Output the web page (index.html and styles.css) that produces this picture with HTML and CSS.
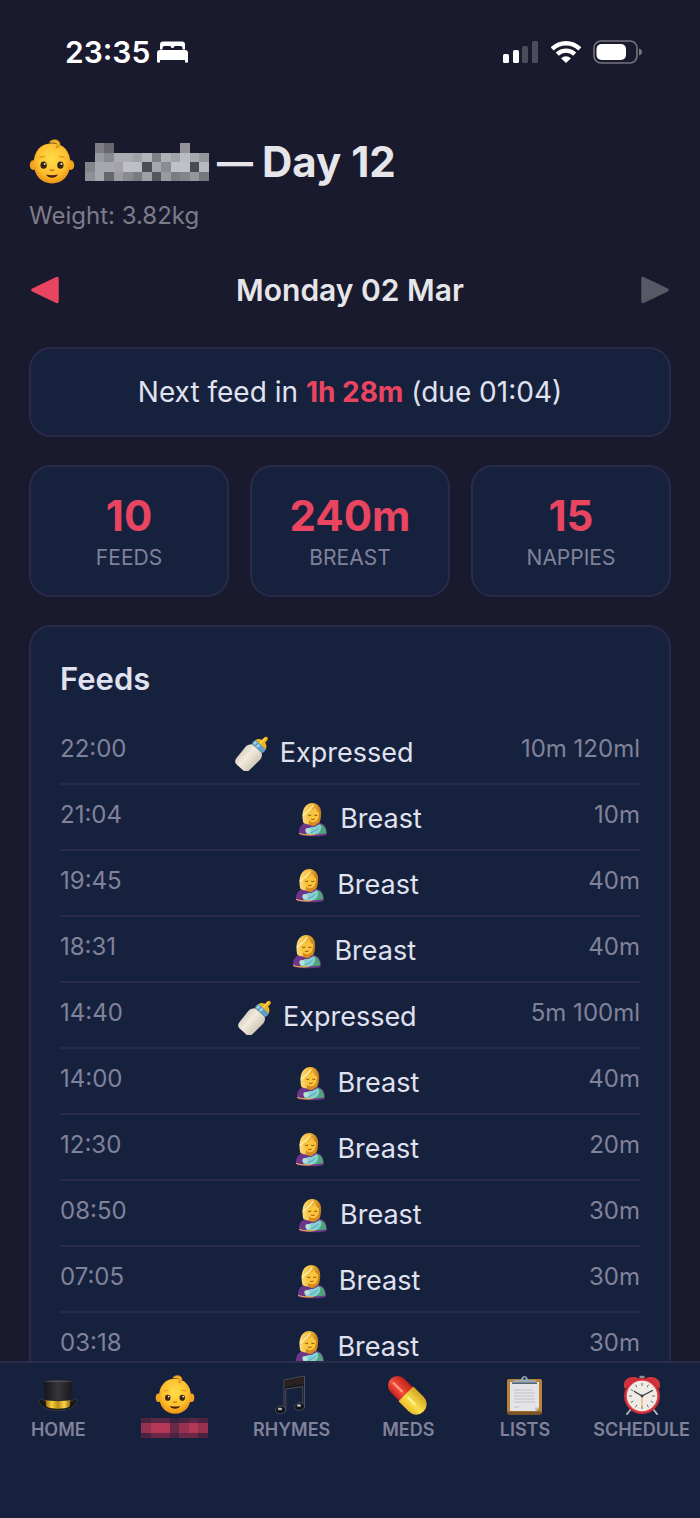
FILE: index.html
```
<!DOCTYPE html>
<html lang="en">
<head>
  <meta charset="UTF-8" />
  <meta name="viewport" content="width=device-width, initial-scale=1.0"/>
  <title>Day 12</title>
  <link rel="stylesheet" href="styles.css">
</head>
<body>
  <!-- shared icons -->
  <svg class="defs" aria-hidden="true">
    <defs>
      <radialGradient id="skin" cx=".5" cy=".4" r=".6">
        <stop offset="0" stop-color="#ffdc4a"/><stop offset=".65" stop-color="#fdc02e"/><stop offset="1" stop-color="#ee9416"/>
      </radialGradient>
      <linearGradient id="hair" x1="0" x2="1">
        <stop offset="0" stop-color="#fbdc78"/><stop offset=".5" stop-color="#f3b93c"/><stop offset="1" stop-color="#c07a1a"/>
      </linearGradient>
      <linearGradient id="milk" x1="0" x2="1">
        <stop offset="0" stop-color="#d9d3c6"/><stop offset=".4" stop-color="#f3ecdd"/><stop offset="1" stop-color="#cfc7b8"/>
      </linearGradient>
      <linearGradient id="felt" x1="0" x2="1">
        <stop offset="0" stop-color="#141416"/><stop offset=".5" stop-color="#37373b"/><stop offset="1" stop-color="#18181b"/>
      </linearGradient>
      <linearGradient id="gold" x1="0" x2="1">
        <stop offset="0" stop-color="#9a6a0c"/><stop offset=".25" stop-color="#f4cf3c"/><stop offset=".5" stop-color="#c08d16"/><stop offset=".75" stop-color="#f6d748"/><stop offset="1" stop-color="#8f620c"/>
      </linearGradient>
      <linearGradient id="red" x1="0" x2="1">
        <stop offset="0" stop-color="#c9201a"/><stop offset=".4" stop-color="#f3503c"/><stop offset="1" stop-color="#c3211a"/>
      </linearGradient>
      <linearGradient id="yellow" x1="0" x2="1">
        <stop offset="0" stop-color="#e8b92a"/><stop offset=".4" stop-color="#f9e04a"/><stop offset="1" stop-color="#d3a422"/>
      </linearGradient>
    </defs>

    <symbol id="baby" viewBox="0 0 44 44">
      <ellipse cx="4" cy="25" rx="3.2" ry="4.6" fill="#f2a41f"/>
      <ellipse cx="40" cy="25" rx="3.2" ry="4.6" fill="#f2a41f"/>
      <path d="M22 4C11 4 4.500 12 4.500 23c0 12 7.500 19.500 17.500 19.500S39.500 35 39.500 23C39.500 12 33 4 22 4z" fill="url(#skin)"/>
      <path d="M19.500 3c3-3.500 9-3 10 1 .8 3-1.800 5-4 4 2-.6 2.300-3 .4-3.900-2-.9-4.200 0-6.400-1.100z" fill="#f6b52c" stroke="#c87f14" stroke-width=".8"/>
      <path d="M10 18q2.500-2 5-.8M29 17.200q2.500-1.200 5 .8" fill="none" stroke="#d68f1c" stroke-width="1"/>
      <ellipse cx="14" cy="25" rx="3" ry="3.400" fill="#3a2310"/>
      <ellipse cx="30" cy="25" rx="3" ry="3.400" fill="#3a2310"/>
      <circle cx="15" cy="23.800" r=".9" fill="#fff"/>
      <circle cx="31" cy="23.800" r=".9" fill="#fff"/>
      <path d="M20.500 29.500q1.500 1.200 3 0" fill="none" stroke="#dd7a18" stroke-width="1.600" stroke-linecap="round"/>
      <path d="M16.500 34q5.500 1.500 11 0c-.6 4-10.400 4-11 0z" fill="#4b1f0c"/>
    </symbol>

    <symbol id="bottle" viewBox="0 0 36 36">
      <g transform="translate(1 0) rotate(42 18 18)">
        <path d="M16 -1c0-3 4-3 4 0v3c3.200 1 4.800 2.800 5 5.500H11c.2-2.700 1.800-4.500 5-5.500z" fill="#f2b41c"/>
        <path d="M17 -1v7" stroke="#ffe06a" stroke-width="1.200"/>
        <rect x="10.500" y="6.500" width="15" height="5.500" rx="2" fill="#5f9fc4"/>
        <path d="M13 7.500v3.500M17 7.500v3.500" stroke="#a8d7ea" stroke-width="2"/>
        <path d="M11.500 12h13c2.500 2.200 3.400 4 3.200 7l-.8 14c-.2 3-2 4.500-4.800 4.500h-8.200c-2.800 0-4.600-1.500-4.800-4.500l-.8-14c-.2-3 .7-4.800 3.200-7z" fill="url(#milk)"/>
      </g>
    </symbol>

    <symbol id="nursing" viewBox="0 0 36 36">
      <path d="M5 32c-.5-5 2.500-9.500 8-10.500h11c6 .8 8.500 4.500 9 10.500-.2 1.600-.8 2.200-2 2.400-8 1.300-16 1.200-23.500.2C6 34.300 5.200 33.500 5 32z" fill="#6d3589"/>
      <path d="M9.500 22C7.500 14 8 3 18 2c7.500.2 10 6.500 9 13-.2 2.500-.6 5-2 7-5 2-11 2.500-15.500 0z" fill="url(#hair)"/>
      <path d="M15 18h8v5c-2 2.500-6 2.500-8 0z" fill="#d98a1c"/>
      <path d="M12.500 12.500C16 12 19.500 9.500 21 6.500c.8 2.500 2 4 4 5 .3 6-2.300 9.700-5.800 9.700-3.700 0-6.900-3.700-6.700-8.700z" fill="#fbc53c"/>
      <path d="M14.200 14q1.500 1.300 3 0M20.300 14q1.500 1.300 3 0" fill="none" stroke="#7b4a12" stroke-width="1"/>
      <path d="M17 18q1.800 1.200 3.600 0" fill="none" stroke="#a34b16" stroke-width="1"/>
      <path d="M9.300 14c3-2.500 7-4.500 9.700-9.500" fill="none" stroke="#fff0a8" stroke-width="1.400" stroke-linecap="round"/>
      <path d="M24.500 23.500c4-1.500 7.500 2.500 7.700 9l-9.200 1z" fill="#4fa578"/>
      <path d="M12 32c.5-4.500 4-6 7-6 3 0 4.500-3 7-2.500 2.500 2 1 7.500-3 9.500-3.500 1.600-9 1.400-11-1z" fill="#84cfd3"/>
      <path d="M17 32c2.500-2 5.500-2.500 7.500-5" fill="none" stroke="#55a3b2" stroke-width="1"/>
      <ellipse cx="14" cy="29.500" rx="2.600" ry="2.400" fill="#b5e2d8"/>
      <path d="M5.500 32.500c4 1.400 10 1.600 15 .8" fill="none" stroke="#e5ad3c" stroke-width="1.200" stroke-linecap="round"/>
    </symbol>

    <symbol id="hat" viewBox="0 0 40 40">
      <path d="M1 25.500c1-2 3-1 5 .5h28c2-1.500 4-2.500 5-.5C38 32 31 35.500 20 35.500S2 32 1 25.500z" fill="#17171a" stroke="#44444a" stroke-width=".7"/>
      <path d="M5.500 6.500c6-1.600 23-1.600 29 0L32 31c-5 3-19 3-24 0z" fill="url(#felt)"/>
      <path d="M5.500 6.500c6-1.400 23-1.400 29 0-6 1-23 1-29 0z" fill="#4b4b50"/>
      <path d="M7.500 25c6 1.500 19 1.500 25 0l-.7 6.500c-5 3-18.600 3-23.600 0z" fill="url(#gold)"/>
    </symbol>

    <symbol id="music" viewBox="0 0 40 40">
      <path d="M12 5 32.500 1v32h-1.700V11.500l-17 2.500v22H12z" fill="#17181c" stroke="#5a5d66" stroke-width=".8"/>
      <path d="M12.500 5.800 32 2v7l-19.500 3z" fill="#2a2122"/>
      <ellipse cx="8.500" cy="35" rx="5" ry="3.800" transform="rotate(-12 8.500 35)" fill="#121317" stroke="#555862" stroke-width=".7"/>
      <ellipse cx="27.500" cy="31.500" rx="5" ry="3.800" transform="rotate(-12 27.500 31.500)" fill="#121317" stroke="#555862" stroke-width=".7"/>
      <ellipse cx="8" cy="34" rx="2.200" ry="1.200" fill="#b7b9bf"/>
      <ellipse cx="27" cy="30.500" rx="2.200" ry="1.200" fill="#b7b9bf"/>
    </symbol>

    <symbol id="pill" viewBox="0 0 40 40">
      <g transform="translate(-1 0) rotate(-45 20 20)">
        <path d="M10.500 20V6.500a9.500 9.500 0 0 1 19 0V20z" fill="url(#red)"/>
        <path d="M9.500 18.500h21v14.500a10.500 10.500 0 0 1-21 0z" fill="url(#yellow)"/>
        <path d="M19 2v12" stroke="#ff9c88" stroke-width="2" stroke-linecap="round"/>
        <path d="M19 23v9" stroke="#fff3a0" stroke-width="2" stroke-linecap="round"/>
      </g>
    </symbol>

    <symbol id="clipboard" viewBox="0 0 40 40">
      <rect x="2" y="4" width="35" height="35.500" rx="2" fill="#b98238"/>
      <path d="M2 36.500h35v1a2 2 0 0 1-2 2H4a2 2 0 0 1-2-2z" fill="#7d5424"/>
      <path d="M5 7h29v26l-3 3H5z" fill="#e4e4e6"/>
      <path d="M34 32.500 30.500 36l-.5-3.500z" fill="#bfbfc2"/>
      <path d="M9 15h19M9 18h21M9 21h20M9 24h21M9 27h21M9 32h5" stroke="#c2c2c6" stroke-width="1"/>
      <path d="M8 8V6.500C8 5.500 9 5 10 5h6c.5-5.500 6.500-5.500 7 0h6c1 0 2 .5 2 1.500V8z" fill="#9aabb9"/>
      <path d="M7 7.500h25V9H7z" fill="#586672"/>
      <circle cx="19.500" cy="3.500" r="1.300" fill="#2c3a48"/>
    </symbol>

    <symbol id="alarm" viewBox="0 0 40 40">
      <path d="m9 34-4 5M31 34l4 5" stroke="#aeb6bd" stroke-width="2" stroke-linecap="round"/>
      <path d="M17.500 .8h5V3h-5z" fill="#8d959c"/>
      <path d="M2.500 13.500C-.5 5 8 -1 17 3.500zM37.500 13.500C40.500 5 32 -1 23 3.500z" fill="#d3343c"/>
      <circle cx="20" cy="21" r="18" fill="#c92c36"/>
      <circle cx="20" cy="21" r="16.300" fill="#e0454f"/>
      <circle cx="20" cy="21" r="15.200" fill="#f1ebe6"/>
      <path d="M20 8v3M20 31v3M7 21h3M30 21h3M13.500 9.700l1.400 2.500M25.100 29.800l1.400 2.500M26.500 9.700l-1.400 2.500M14.900 29.800l-1.400 2.500M8.700 14.500l2.500 1.400M28.800 26.100l2.500 1.400M8.700 27.500l2.500-1.400" stroke="#5c5c60" stroke-width=".9"/>
      <path d="M20 21 12.500 16.500M20 21l10.500-5.500" stroke="#333a3c" stroke-width="1.300" stroke-linecap="round"/>
      <path d="M20 21v12" stroke="#e0a14a" stroke-width=".9"/>
      <circle cx="20" cy="21" r="1.400" fill="#333a3c"/>
    </symbol>
  </svg>

  <div class="status-bar">
    <div class="status-left">
      <span>23:35</span>
      <svg width="31" height="22" viewBox="0 0 31 22" fill="#fff" aria-hidden="true">
        <path d="M3 8.500V3.500Q3 .5 6 .5h19q3 0 3 3v5h-2.500V7q0-2-2-2h-5q-2 0-2 2h-2q0-2-2-2h-5q-2 0-2 2v1.500z"/>
        <path d="M0 21.500V12q0-3 3-3h25q3 0 3 3v9.500h-3V19H3v2.500z"/>
      </svg>
    </div>
    <div class="status-right">
      <svg width="36" height="22" viewBox="0 0 36 22" fill="#fff" aria-hidden="true">
        <rect x="0" y="13" width="6" height="9" rx="1.500"/>
        <rect x="10" y="9" width="6" height="13" rx="1.500"/>
        <rect x="19" y="5" width="6" height="17" rx="1.500" opacity=".22"/>
        <rect x="29" y="0" width="6" height="22" rx="1.500" opacity=".22"/>
      </svg>
      <svg width="30" height="22" viewBox="0 0 30 22" aria-hidden="true">
        <g fill="none" stroke="#fff" stroke-width="4.400">
          <path d="M1.200 7.900Q7 2.200 15 2.200t13.800 5.700"/>
          <path d="M6.300 13.100Q10 9.600 15 9.600t8.700 3.500"/>
        </g>
        <path d="M10 17.200q5-4 10 0L15 22z" fill="#fff"/>
      </svg>
      <svg width="49" height="24" viewBox="0 0 49 24" aria-hidden="true">
        <rect x="1" y="1" width="43" height="22" rx="7" fill="none" stroke="#75757f" stroke-width="1.600"/>
        <rect x="3.500" y="4" width="29.500" height="16" rx="5" fill="#fff"/>
        <path d="M46 8.500q3 1 3 3.500t-3 3.500z" fill="#75757f"/>
      </svg>
    </div>
  </div>

  <main>
    <header>
      <h1>
        <svg class="title-icon" aria-hidden="true"><use href="#baby"/></svg>
        <svg class="title-name" viewBox="0 0 13 4" preserveAspectRatio="none" shape-rendering="crispEdges" aria-label="Hidden name">
          <path d="M1 0h1v1h-1z" fill="#7d7d83"/><path d="M2 0h1v1h-1z" fill="#66666d"/><path d="M10 0h1v1h-1z" fill="#939399"/>
          <path d="M1 1h1v1h-1z" fill="#9a9aa1"/><path d="M2 1h1v1h-1z" fill="#88888f"/><path d="M3 1h2v1h-2z" fill="#abacb3"/><path d="M5 1h1v1h-1z" fill="#a1a2a8"/><path d="M6 1h1v1h-1z" fill="#b3b4bb"/><path d="M7 1h1v1h-1z" fill="#808187"/><path d="M8 1h1v1h-1z" fill="#b0b1b8"/><path d="M9 1h1v1h-1z" fill="#a3a4aa"/><path d="M10 1h1v1h-1z" fill="#bcbdc3"/><path d="M11 1h1v1h-1z" fill="#a8a9af"/><path d="M12 1h1v1h-1z" fill="#96979d"/>
          <path d="M0 2h1v1h-1z" fill="#84858b"/><path d="M1 2h2v1h-2z" fill="#a7a8ae"/><path d="M3 2h1v1h-1z" fill="#a2a2a8"/><path d="M4 2h2v1h-2z" fill="#bdbec6"/><path d="M6 2h1v1h-1z" fill="#4c4e55"/><path d="M7 2h1v1h-1z" fill="#a6a7ad"/><path d="M8 2h1v1h-1z" fill="#8b8c92"/><path d="M9 2h2v1h-2z" fill="#c0c1c8"/><path d="M11 2h1v1h-1z" fill="#494b53"/><path d="M12 2h1v1h-1z" fill="#b8b9bf"/>
          <path d="M0 3h1v1h-1z" fill="#8f9096"/><path d="M1 3h1v1h-1z" fill="#a8a9ae"/><path d="M2 3h1v1h-1z" fill="#66676d"/><path d="M3 3h1v1h-1z" fill="#9b9ca2"/><path d="M4 3h1v1h-1z" fill="#8a8b91"/><path d="M5 3h1v1h-1z" fill="#7b7c82"/><path d="M6 3h1v1h-1z" fill="#a0a1a7"/><path d="M7 3h1v1h-1z" fill="#55575d"/><path d="M8 3h1v1h-1z" fill="#9a9ba1"/><path d="M9 3h1v1h-1z" fill="#7b7c82"/><path d="M10 3h1v1h-1z" fill="#84858b"/><path d="M11 3h1v1h-1z" fill="#96979d"/><path d="M12 3h1v1h-1z" fill="#77787e"/>
        </svg>
        <span class="dash">—</span>
        <span>Day 12</span>
      </h1>
      <p class="weight">Weight: 3.82kg</p>
    </header>

    <div class="date-nav">
      <button type="button" class="prev" aria-label="Previous day">
        <svg width="28" height="28" viewBox="0 0 28 28"><path d="M2 14 26 2.500v23z" fill="currentColor" stroke="currentColor" stroke-width="3.500" stroke-linejoin="round"/></svg>
      </button>
      <h2>Monday 02 Mar</h2>
      <button type="button" class="next" aria-label="Next day" disabled>
        <svg width="28" height="28" viewBox="0 0 28 28"><path d="M26 14 2 2.500v23z" fill="currentColor" stroke="currentColor" stroke-width="3.500" stroke-linejoin="round"/></svg>
      </button>
    </div>

    <div class="card next-feed">Next feed in <strong>1h 28m</strong> (due 01:04)</div>

    <div class="stats">
      <div class="card stat"><div class="value">10</div><div class="label">FEEDS</div></div>
      <div class="card stat"><div class="value">240m</div><div class="label">BREAST</div></div>
      <div class="card stat"><div class="value">15</div><div class="label">NAPPIES</div></div>
    </div>

    <section class="card feeds">
      <h3>Feeds</h3>
      <ul>
        <li><time>22:00</time><span class="type"><svg><use href="#bottle"/></svg>Expressed</span><span class="amount">10m 120ml</span></li>
        <li><time>21:04</time><span class="type"><svg><use href="#nursing"/></svg>Breast</span><span class="amount">10m</span></li>
        <li><time>19:45</time><span class="type"><svg><use href="#nursing"/></svg>Breast</span><span class="amount">40m</span></li>
        <li><time>18:31</time><span class="type"><svg><use href="#nursing"/></svg>Breast</span><span class="amount">40m</span></li>
        <li><time>14:40</time><span class="type"><svg><use href="#bottle"/></svg>Expressed</span><span class="amount">5m 100ml</span></li>
        <li><time>14:00</time><span class="type"><svg><use href="#nursing"/></svg>Breast</span><span class="amount">40m</span></li>
        <li><time>12:30</time><span class="type"><svg><use href="#nursing"/></svg>Breast</span><span class="amount">20m</span></li>
        <li><time>08:50</time><span class="type"><svg><use href="#nursing"/></svg>Breast</span><span class="amount">30m</span></li>
        <li><time>07:05</time><span class="type"><svg><use href="#nursing"/></svg>Breast</span><span class="amount">30m</span></li>
        <li><time>03:18</time><span class="type"><svg><use href="#nursing"/></svg>Breast</span><span class="amount">30m</span></li>
      </ul>
    </section>
  </main>

  <nav class="tabs">
    <a href="#"><svg class="tab-icon"><use href="#hat"/></svg>HOME</a>
    <a href="#" class="active" aria-label="Baby" aria-current="page">
      <svg class="tab-icon"><use href="#baby"/></svg>
      <svg class="tab-name" viewBox="0 0 7 4" preserveAspectRatio="none" shape-rendering="crispEdges" aria-hidden="true">
        <path d="M0 0h7v4h-7z" fill="#482442"/>
        <path d="M1 0h2v1h-2zM5 0h1v1h-1z" fill="#5a2846"/><path d="M3 0h1v1h-1z" fill="#382441"/>
        <path d="M0 1h1v2h-1zM4 1h1v2h-1zM6 1h1v2h-1z" fill="#98314f"/>
        <path d="M1 1h2v2h-2zM5 1h1v2h-1z" fill="#b43856"/><path d="M3 1h1v2h-1z" fill="#672a48"/>
        <path d="M1 3h2v1h-2zM4 3h2v1h-2z" fill="#6b2846"/>
      </svg>
    </a>
    <a href="#"><svg class="tab-icon"><use href="#music"/></svg>RHYMES</a>
    <a href="#"><svg class="tab-icon"><use href="#pill"/></svg>MEDS</a>
    <a href="#"><svg class="tab-icon"><use href="#clipboard"/></svg>LISTS</a>
    <a href="#"><svg class="tab-icon"><use href="#alarm"/></svg>SCHEDULE</a>
  </nav>
</body>
</html>
```

FILE: styles.css
```
:root {
  --bg: #1a1a2e;
  --card: #16213e;
  --border: #2a2a4a;
  --text: #e0e2f0;
  --muted: #80829a;
  --accent: #e94560;
}

* {
  box-sizing: border-box;
}

body {
  margin: 0;
  height: 100vh;
  display: flex;
  flex-direction: column;
  overflow: hidden;
  background: var(--bg);
  color: var(--text);
  font-family: Inter, "Liberation Sans", sans-serif;
  font-size: 27px;
}

h1, h2, h3, p, ul {
  margin: 0;
  padding: 0;
}

.defs {
  position: absolute;
  width: 0;
  height: 0;
}

.status-bar {
  flex: none;
  display: flex;
  justify-content: space-between;
  align-items: center;
  height: 104px;
  padding: 0 58px 0 65px;
  color: #fff;
}

.status-left {
  display: flex;
  align-items: center;
  gap: 7px;
  font-size: 30px;
  font-weight: 600;
}

.status-right {
  display: flex;
  align-items: center;
  gap: 12px;
}

main {
  flex: 1;
  min-height: 0;
  overflow-y: auto;
  scrollbar-width: none;
  padding: 32px 29px 0;
}

h1 {
  display: flex;
  align-items: center;
  font-size: 42px;
  font-weight: 700;
  line-height: 52px;
  color: #e6e6ea;
}

.title-icon {
  width: 46px;
  height: 46px;
  margin-right: 10px;
}

.title-name {
  width: 124px;
  height: 38px;
  margin-right: 8px;
}

.dash {
  margin-right: 9px;
  font-size: 36px;
}

.weight {
  margin-top: 10px;
  font-size: 24px;
  line-height: 36px;
  color: #7d7c89;
}

.date-nav {
  display: flex;
  justify-content: space-between;
  align-items: center;
  height: 44px;
  margin: 34px 2px 35px;
}

.date-nav h2 {
  font-size: 30px;
  font-weight: 600;
  color: #e6e6ea;
}

.date-nav button {
  display: flex;
  padding: 0;
  border: none;
  background: none;
  color: var(--accent);
  cursor: pointer;
}

.date-nav .next {
  color: #585866;
  cursor: default;
}

.card {
  background: var(--card);
  border: 2px solid var(--border);
  border-radius: 22px;
}

.next-feed {
  padding: 22px;
  font-size: 28px;
  line-height: 42px;
  text-align: center;
}

.next-feed strong {
  color: var(--accent);
}

.stats {
  display: grid;
  grid-template-columns: repeat(3, 1fr);
  gap: 21px;
  margin: 28px 0;
}

.stat {
  padding: 24px 0 20px;
  text-align: center;
}

.stat .value {
  font-size: 42px;
  font-weight: 700;
  line-height: 50px;
  color: var(--accent);
}

.stat .label {
  font-size: 21px;
  line-height: 34px;
  color: var(--muted);
}

.feeds {
  padding: 29px;
}

.feeds h3 {
  margin-bottom: 17px;
  font-size: 31px;
  font-weight: 600;
  line-height: 46px;
}

.feeds ul {
  list-style: none;
}

.feeds li {
  display: flex;
  justify-content: space-between;
  align-items: flex-start;
  height: 66px;
  padding-top: 12px;
  border-bottom: 2px solid var(--border);
}

.feeds time,
.feeds .amount {
  font-size: 24px;
  line-height: 36px;
  color: var(--muted);
}

.type {
  display: flex;
  align-items: center;
  gap: 10px;
  line-height: 44px;
}

.type svg {
  width: 36px;
  height: 36px;
}

.tabs {
  flex: none;
  display: grid;
  grid-template-columns: repeat(6, minmax(0, 1fr));
  height: 157px;
  padding-top: 12px;
  background: var(--card);
  border-top: 2px solid var(--border);
}

.tabs a {
  display: flex;
  flex-direction: column;
  align-items: center;
  gap: 3px;
  font-size: 18px;
  font-weight: 600;
  line-height: 24px;
  color: var(--muted);
  text-decoration: none;
}

.tab-icon {
  width: 40px;
  height: 40px;
}

.tab-name {
  width: 67px;
  height: 20px;
}
```
